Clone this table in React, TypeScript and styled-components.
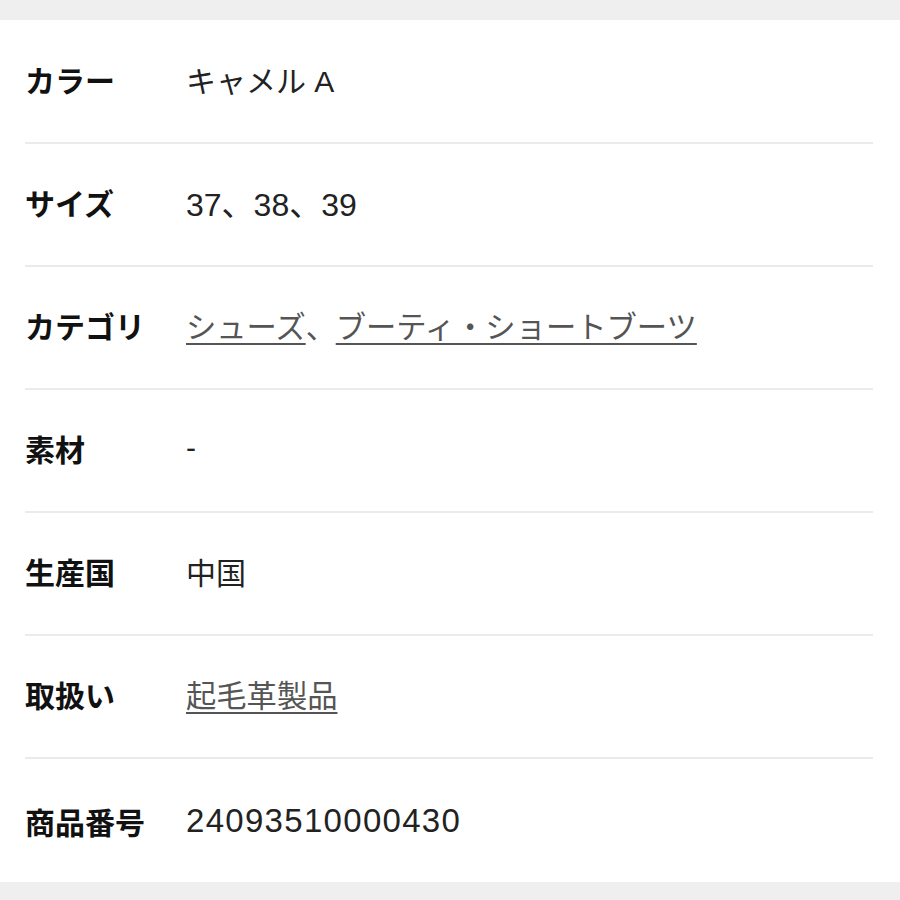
import styled, { createGlobalStyle } from 'styled-components';

interface ValuePart {
  text: string;
  link?: boolean;
}

interface SpecRow {
  label: string;
  parts: ValuePart[];
  size?: number;
  spacing?: number;
}

const rows: SpecRow[] = [
  { label: 'カラー', parts: [{ text: 'キャメル A' }] },
  { label: 'サイズ', parts: [{ text: '37、38、39' }], size: 32 },
  {
    label: 'カテゴリ',
    parts: [
      { text: 'シューズ', link: true },
      { text: '、' },
      { text: 'ブーティ・ショートブーツ', link: true }
    ]
  },
  { label: '素材', parts: [{ text: '-' }] },
  { label: '生産国', parts: [{ text: '中国' }] },
  { label: '取扱い', parts: [{ text: '起毛革製品', link: true }] },
  { label: '商品番号', parts: [{ text: '24093510000430' }], size: 33, spacing: 1.3 }
];

const App = () => {
  return (
    <>
      <GlobalStyle />
      <Page>
        <Panel>
          {rows.map((row) => (
            <Row key={row.label}>
              <Label>{row.label}</Label>
              <Value $size={row.size ?? 30} $spacing={row.spacing ?? 0}>
                {row.parts.map((part, i) =>
                  part.link ? (
                    <Link key={i} href="#">
                      {part.text}
                    </Link>
                  ) : (
                    <Plain key={i} $gray={row.parts.some((p) => p.link)}>
                      {part.text}
                    </Plain>
                  )
                )}
              </Value>
            </Row>
          ))}
        </Panel>
      </Page>
    </>
  );
};

const GlobalStyle = createGlobalStyle`
  html, body {
    margin: 0;
    padding: 0;
    background: #efefef;
  }
  body {
    font-family: "Liberation Sans", "Noto Sans CJK JP", sans-serif;
  }
`;

const Page = styled.div`
  padding: 20px 0 18px;
  background: #efefef;
`;

const Panel = styled.div`
  background: #fff;
  padding: 1px 27px 0 25px;
`;

const Row = styled.div`
  display: grid;
  grid-template-columns: 161px 1fr;
  align-items: center;
  height: 123px;
  box-sizing: border-box;
  padding-bottom: 6px;
  border-bottom: 2px solid #ebebeb;

  &:last-child {
    border-bottom: none;
    padding-bottom: 0;
  }
`;

const Label = styled.div`
  font-size: 30px;
  font-weight: 700;
  color: #111;
  white-space: nowrap;
`;

const Value = styled.div<{ $size: number; $spacing: number }>`
  font-size: ${(p) => p.$size}px;
  color: #222;
  letter-spacing: ${(p) => p.$spacing}px;
  white-space: nowrap;
`;

const Link = styled.a`
  color: #555;
  font-size: 30.3px;
  text-decoration: underline;
  text-decoration-thickness: 2px;
  text-underline-offset: 5px;
`;

const Plain = styled.span<{ $gray: boolean }>`
  color: ${(p) => (p.$gray ? '#555' : 'inherit')};
`;

export default App;
